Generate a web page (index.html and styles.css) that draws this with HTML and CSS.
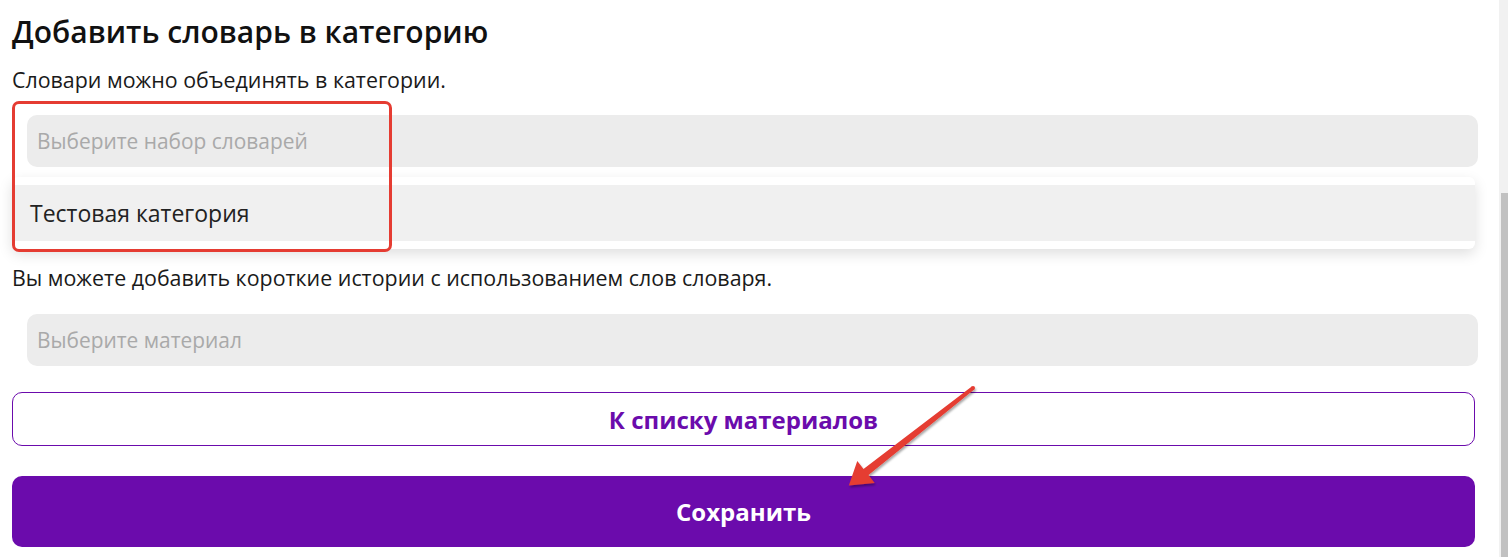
FILE: index.html
```html
<!DOCTYPE html>
<html lang="ru">
<head>
<meta charset="utf-8">
<title>Добавить словарь в категорию</title>
<link rel="stylesheet" href="styles.css">
</head>
<body>
<div class="page">
  <main class="content">
    <h1 class="title">Добавить словарь в категорию</h1>
    <p class="hint hint-first">Словари можно объединять в категории.</p>
    <div class="field">
      <div class="select">Выберите набор словарей</div>
      <div class="dropdown">
        <div class="option">Тестовая категория</div>
      </div>
      <div class="annot-box"></div>
    </div>
    <p class="hint hint-second">Вы можете добавить короткие истории с использованием слов словаря.</p>
    <div class="select select-material">Выберите материал</div>
    <button class="btn btn-outline" type="button">К списку материалов</button>
    <button class="btn btn-primary" type="button">Сохранить</button>
    <svg class="annot-arrow" width="1499" height="557" viewBox="0 0 1499 557" aria-hidden="true">
      <defs>
        <filter id="sh" x="-10%" y="-10%" width="130%" height="130%">
          <feDropShadow dx="1" dy="2" stdDeviation="1.2" flood-color="#000" flood-opacity="0.35"/>
        </filter>
      </defs>
      <g filter="url(#sh)" fill="#e53c32">
        <polygon points="971.8,386.4 863.5,468.9 857.3,461.1 848.8,485.6 874.7,482.9 868.5,475.1 974.2,389.6"/>
        <circle cx="973" cy="388" r="2"/>
      </g>
    </svg>
  </main>
  <div class="scrollbar"><div class="thumb"></div></div>
</div>
</body>
</html>
```
FILE: styles.css
```css
html, body {
  margin: 0;
  padding: 0;
  height: 100%;
  overflow: hidden;
  background: #fff;
}
body {
  font-family: "Open Sans", "Noto Sans", sans-serif;
  color: #1a1a1a;
}
.page {
  position: relative;
  display: flex;
  height: 557px;
}
.content {
  flex: 1;
  display: flex;
  flex-direction: column;
  padding: 12px 24px 0 12px;
  min-width: 0;
}
.title {
  margin: 0;
  font-size: 30px;
  font-weight: 600;
  line-height: 40px;
  color: #111;
}
.hint {
  margin: 0;
  font-size: 21.4px;
  line-height: 28px;
  color: #1a1a1a;
}
.hint-first { margin-top: 14px; }
.hint-second { margin-top: 15px; }
.field {
  position: relative;
  margin-top: 21px;
  display: flex;
  flex-direction: column;
}
.select {
  height: 52px;
  margin: 0 -3px 0 15px;
  padding-left: 10px;
  display: flex;
  align-items: center;
  background: #ececec;
  border-radius: 10px;
  color: #a9a9a9;
  font-size: 20.9px;
}
.select-material { margin-top: 22px; }
.dropdown {
  margin-top: 10px;
  padding: 8px 0;
  background: #fff;
  border-radius: 6px;
  box-shadow: 0 5px 14px rgba(0, 0, 0, 0.13);
}
.option {
  height: 56px;
  padding-left: 18px;
  display: flex;
  align-items: center;
  background: #f0f0f0;
  font-size: 23px;
  color: #222;
}
.annot-box {
  position: absolute;
  left: 0;
  top: -14px;
  width: 380px;
  height: 151px;
  box-sizing: border-box;
  border: 3px solid #e53c32;
  border-radius: 7px;
  pointer-events: none;
}
.btn {
  display: block;
  width: 100%;
  font-family: inherit;
  font-size: 24px;
  font-weight: 700;
  border-radius: 10px;
  cursor: pointer;
}
.btn-outline {
  margin-top: 26px;
  height: 54px;
  background: #fff;
  border: 1px solid #6b0bac;
  color: #6b0bac;
}
.btn-primary {
  margin-top: 30px;
  height: 71px;
  background: #6b0bac;
  border: none;
  color: #fff;
}
.annot-arrow {
  position: absolute;
  left: 0;
  top: 0;
  pointer-events: none;
}
.scrollbar {
  width: 9px;
  flex: none;
  background: #f1f1f1;
  display: flex;
  flex-direction: column;
  padding-top: 193px;
  box-sizing: border-box;
}
.thumb {
  flex: 1;
  margin-left: 2px;
  background: #c1c1c1;
}
```
